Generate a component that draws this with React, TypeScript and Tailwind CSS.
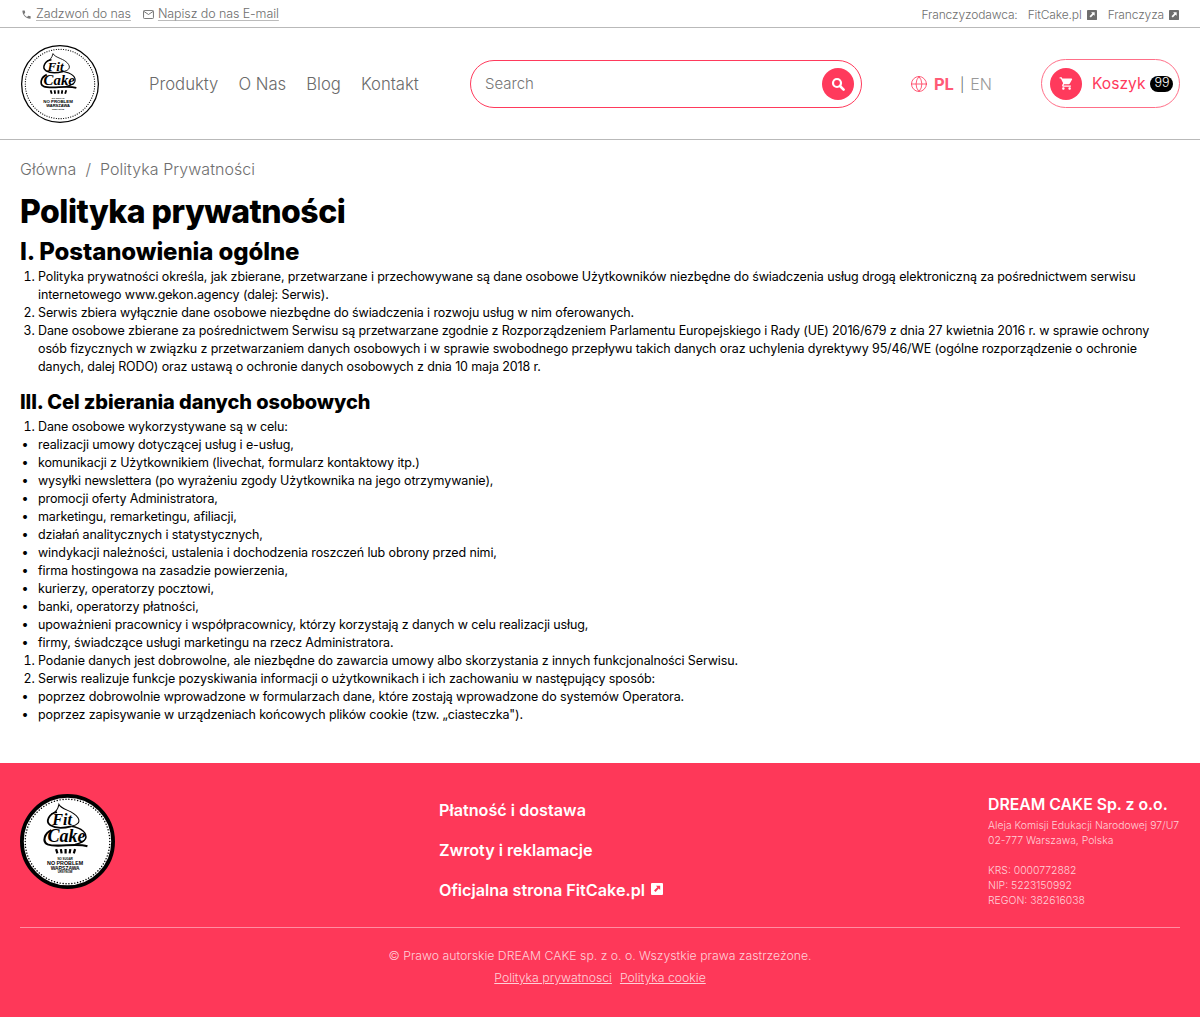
import React from "react";
import { Globe } from "lucide-react";

const F = "font-['Inter','Liberation_Sans',sans-serif]";

function Ext({ cls }: { cls: string }) {
  return (
    <svg viewBox="0 0 12 12" className={cls}>
      <rect width="12" height="12" rx="1" fill="currentColor" />
      <path d="M5 2.8h4.2V7L7.7 5.6 4.6 9 3 7.4l3.3-3.1z" fill="var(--bgx,#fff)" />
    </svg>
  );
}

function Logo({ size, thick }: { size: number; thick: number }) {
  return (
    <svg viewBox="0 0 100 100" width={size} height={size} className="shrink-0">
      <circle cx="50" cy="50" r={50 - thick / 2} fill="#fff" stroke="#000" strokeWidth={thick} />
      <circle cx="50" cy="50" r="44.5" fill="none" stroke="#000" strokeWidth="1.5" strokeDasharray="0.1 3" strokeLinecap="round" />
      <path d="M33 21C37 20 40 16 41 11C44 17 56 17 61 25C64 30 60 33 54 34" fill="none" stroke="#000" strokeWidth="1.1" />
      <path d="M39 19C31 20 26 29 32 33C37 36 46 36 54 34" fill="none" stroke="#000" strokeWidth="1.9" />
      <path d="M54 34C65 36 71 41 69 47C67 51 63 52 58 53" fill="none" stroke="#000" strokeWidth="1.5" />
      <path d="M33 38C26 41 23 50 29 53C39 57 58 51 71 55" fill="none" stroke="#000" strokeWidth="2.2" />
      <text x="34" y="33" fontFamily="'Liberation Serif',serif" fontStyle="italic" fontWeight="700" fontSize="17" fill="#000">Fit</text>
      <text x="29" y="51" fontFamily="'Liberation Serif',serif" fontStyle="italic" fontWeight="700" fontSize="19" fill="#000">Cake</text>
      <path d="M38 58l1.4 4.5M43 58l.8 4.5M48 58v4.5M53 58l-.8 4.5M58 58l-1.4 4.5" stroke="#000" strokeWidth="2.3" />
      <text x="47.5" y="69.5" textAnchor="middle" fontFamily="'Liberation Sans',sans-serif" fontWeight="700" fontSize="3" fill="#000">NO SUGAR</text>
      <text x="47.5" y="74.5" textAnchor="middle" fontFamily="'Liberation Sans',sans-serif" fontWeight="700" fontSize="5.6" fill="#000">NO PROBLEM</text>
      <text x="47.5" y="79.5" textAnchor="middle" fontFamily="'Liberation Sans',sans-serif" fontWeight="700" fontSize="5.2" fill="#000">WARSZAWA</text>
      <text x="47.5" y="83.5" textAnchor="middle" fontFamily="'Liberation Sans',sans-serif" fontWeight="700" fontSize="3" fill="#000">URSYNÓW</text>
    </svg>
  );
}

const ol = "list-decimal pl-[18px]";
const ul = "[list-style-type:'•___'] pl-[18px]";

export default function App() {
  return (
    <div className={`${F} w-[1200px] h-[1017px] overflow-hidden bg-white text-black flex flex-col`}>
      <div className="h-[28px] shrink-0 border-b border-[#b9b9b9] pl-[21px] pr-[21px] pt-[2px] flex items-center justify-between text-[#6e6e6e] font-light">
        <div className="flex items-center text-[12.5px] tracking-[-0.1px]">
          <svg viewBox="0 0 24 24" className="w-[11px] h-[11px] mr-[4px]" fill="#777"><path d="M6.62 10.79c1.44 2.83 3.76 5.14 6.59 6.59l2.2-2.2c.27-.27.67-.36 1.02-.24 1.12.37 2.33.57 3.57.57.55 0 1 .45 1 1V20c0 .55-.45 1-1 1-9.39 0-17-7.61-17-17 0-.55.45-1 1-1h3.5c.55 0 1 .45 1 1 0 1.25.2 2.45.57 3.57.11.35.03.74-.25 1.02l-2.2 2.2z" /></svg>
          <span className="underline decoration-[#bbb] underline-offset-2">Zadzwoń do nas</span>
          <svg viewBox="0 0 12 10" className="w-[11px] h-[9px] ml-3 mr-[4px]" fill="none" stroke="#666" strokeWidth="1"><rect x=".5" y=".5" width="11" height="9" rx="1" /><path d="M.8 1.5 6 5l5.2-3.5" /></svg>
          <span className="underline decoration-[#bbb] underline-offset-2">Napisz do nas E-mail</span>
        </div>
        <div className="flex items-center text-[12px] tracking-[-0.12px]">
          <span className="mr-[10px]">Franczyzodawca:</span>
          <span>FitCake.pl</span>
          <Ext cls="w-[10px] h-[10px] ml-[5px] mr-[11px]" />
          <span>Franczyza</span>
          <Ext cls="w-[10px] h-[10px] ml-[5px]" />
        </div>
      </div>

      <header className="h-[112px] shrink-0 border-b border-[#b9b9b9] pl-[21px] pr-5 flex items-center">
        <Logo size={78} thick={1.6} />
        <nav className="ml-[50px] pt-[2px] flex gap-[20px] text-[16.7px] text-[#6a6a6a] font-light">
          <span>Produkty</span>
          <span>O Nas</span>
          <span>Blog</span>
          <span>Kontakt</span>
        </nav>
        <div className="ml-auto w-[392px] h-[48px] rounded-full border border-[#ff3a5c] flex items-center pl-[14px] pr-[7px]">
          <span className="flex-1 pt-[2px] text-[15px] text-[#757575] font-light">Search</span>
          <span className="w-8 h-8 rounded-full bg-[#ff3a5c] flex items-center justify-center">
            <svg viewBox="0 0 14 14" className="w-[14px] h-[14px]" fill="none" stroke="#fff"><circle cx="6" cy="6" r="4" strokeWidth="2.2" /><path d="M9 9l3.6 3.6" strokeWidth="2.6" strokeLinecap="round" /></svg>
          </span>
        </div>
        <div className="ml-[49px] w-[81px] pt-[1px] flex items-center text-[16px]">
          <Globe size={20} color="#ff3a5c" strokeWidth={1.1} className="-ml-[1px]" />
          <span className="ml-[6px] text-[16.5px] font-bold text-[#ff5a75]">PL</span>
          <span className="mx-[6px] text-[14px] text-[#666] font-light">|</span>
          <span className="text-[#999] font-light">EN</span>
        </div>
        <div className="ml-[49px] w-[139px] h-[49px] rounded-full border border-[#ff6f88] flex items-center pl-2">
          <span className="w-8 h-8 rounded-full bg-[#ff3a5c] flex items-center justify-center">
            <svg viewBox="0 0 24 24" className="w-[15px] h-[15px]" fill="#fff"><path d="M7 18c-1.1 0-1.99.9-1.99 2S5.9 22 7 22s2-.9 2-2-.9-2-2-2zM1 2v2h2l3.6 7.59-1.35 2.45c-.16.28-.25.61-.25.96 0 1.1.9 2 2 2h12v-2H7.42c-.14 0-.25-.11-.25-.25l.03-.12.9-1.63h7.45c.75 0 1.41-.41 1.75-1.03l3.58-6.49c.08-.14.12-.31.12-.48 0-.55-.45-1-1-1H5.21l-.94-2H1zm16 16c-1.1 0-1.99.9-1.99 2s.89 2 1.99 2 2-.9 2-2-.9-2-2-2z" /></svg>
          </span>
          <span className="ml-[10px] text-[15.6px] text-[#ff3a5c] font-normal">Koszyk</span>
          <span className="ml-[5px] w-[23px] h-[16px] rounded-full bg-black text-white text-[12.5px] font-light flex items-center justify-center">99</span>
        </div>
      </header>

      <main className="flex-1 px-5">
        <div className="mt-[17px] text-[16px] leading-[24px] text-[#6e6e6e] font-light flex gap-[9px] tracking-[0.05px]">
          <span>Główna</span><span>/</span><span>Polityka Prywatności</span>
        </div>
        <h1 className="mt-[11px] text-[32px] leading-[40px] font-extrabold tracking-[-0.5px]">Polityka prywatności</h1>
        <h2 className="mt-[2px] text-[24px] leading-[36px] font-extrabold tracking-[-0.1px]">I. Postanowienia ogólne</h2>
        <div className="text-[12.5px] leading-[18px] font-normal tracking-[-0.12px]">
          <ol className={`${ol} mt-[-2px]`}>
            <li>Polityka prywatności określa, jak zbierane, przetwarzane i przechowywane są dane osobowe Użytkowników niezbędne do świadczenia usług drogą elektroniczną za pośrednictwem serwisu internetowego www.gekon.agency (dalej: Serwis).</li>
            <li>Serwis zbiera wyłącznie dane osobowe niezbędne do świadczenia i rozwoju usług w nim oferowanych.</li>
            <li>Dane osobowe zbierane za pośrednictwem Serwisu są przetwarzane zgodnie z Rozporządzeniem Parlamentu Europejskiego i Rady (UE) 2016/679 z dnia 27 kwietnia 2016 r. w sprawie ochrony osób fizycznych w związku z przetwarzaniem danych osobowych i w sprawie swobodnego przepływu takich danych oraz uchylenia dyrektywy 95/46/WE (ogólne rozporządzenie o ochronie danych, dalej RODO) oraz ustawą o ochronie danych osobowych z dnia 10 maja 2018 r.</li>
          </ol>
          <h3 className="mt-[13px] mb-[3px] text-[20px] leading-[26px] font-extrabold tracking-[-0.1px]">III. Cel zbierania danych osobowych</h3>
          <ol className={ol}><li>Dane osobowe wykorzystywane są w celu:</li></ol>
          <ul className={ul}>
            <li>realizacji umowy dotyczącej usług i e-usług,</li>
            <li>komunikacji z Użytkownikiem (livechat, formularz kontaktowy itp.)</li>
            <li>wysyłki newslettera (po wyrażeniu zgody Użytkownika na jego otrzymywanie),</li>
            <li>promocji oferty Administratora,</li>
            <li>marketingu, remarketingu, afiliacji,</li>
            <li>działań analitycznych i statystycznych,</li>
            <li>windykacji należności, ustalenia i dochodzenia roszczeń lub obrony przed nimi,</li>
            <li>firma hostingowa na zasadzie powierzenia,</li>
            <li>kurierzy, operatorzy pocztowi,</li>
            <li>banki, operatorzy płatności,</li>
            <li>upoważnieni pracownicy i współpracownicy, którzy korzystają z danych w celu realizacji usług,</li>
            <li>firmy, świadczące usługi marketingu na rzecz Administratora.</li>
          </ul>
          <ol className={ol}>
            <li>Podanie danych jest dobrowolne, ale niezbędne do zawarcia umowy albo skorzystania z innych funkcjonalności Serwisu.</li>
            <li>Serwis realizuje funkcje pozyskiwania informacji o użytkownikach i ich zachowaniu w następujący sposób:</li>
          </ol>
          <ul className={ul}>
            <li>poprzez dobrowolnie wprowadzone w formularzach dane, które zostają wprowadzone do systemów Operatora.</li>
            <li>poprzez zapisywanie w urządzeniach końcowych plików cookie (tzw. „ciasteczka").</li>
          </ul>
        </div>
      </main>

      <footer className="h-[254px] shrink-0 bg-[#fe3859] text-white px-5 pt-[31px]">
        <div className="flex h-[133px]">
          <div className="w-[419px]"><Logo size={95} thick={4} /></div>
          <div className="flex-1 flex flex-col gap-[16px] text-[16.2px] leading-[24px] font-semibold pt-[4px]">
            <span>Płatność i dostawa</span>
            <span>Zwroty i reklamacje</span>
            <span className="flex items-start">Oficjalna strona FitCake.pl<Ext cls="w-[12px] h-[12px] ml-[6px] mt-[5px] text-white [--bgx:#fe3859]" /></span>
          </div>
          <div className="w-[192px] text-[10.4px] leading-[15px] text-[#ffd0d8] font-light whitespace-nowrap">
            <div className="text-[15.8px] leading-[22px] text-white font-semibold mb-[2px]">DREAM CAKE Sp. z o.o.</div>
            <div>Aleja Komisji Edukacji Narodowej 97/U7</div>
            <div>02-777 Warszawa, Polska</div>
            <div className="mt-[15px]">KRS: 0000772882</div>
            <div>NIP: 5223150992</div>
            <div>REGON: 382616038</div>
          </div>
        </div>
        <div className="border-t border-[#ff8ea2] text-center text-[12.25px] text-[#ffd0d8] font-light pt-[17px] leading-[22px]">
          <div>© Prawo autorskie DREAM CAKE sp. z o. o. Wszystkie prawa zastrzeżone.</div>
          <div className="flex justify-center gap-2"><span className="underline">Polityka prywatnosci</span><span className="underline">Polityka cookie</span></div>
        </div>
      </footer>
    </div>
  );
}
